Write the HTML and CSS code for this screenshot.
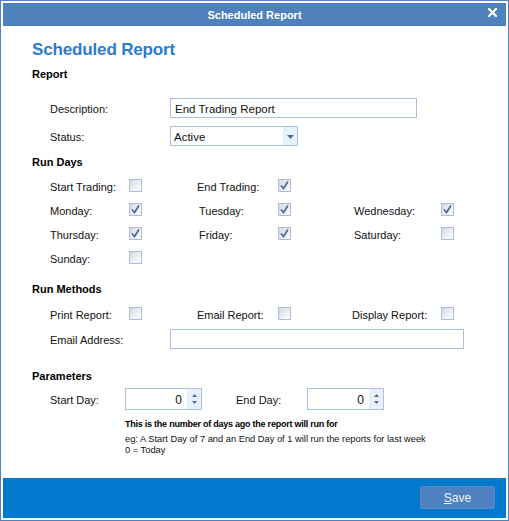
FILE: index.html
```html
<!DOCTYPE html>
<html>
<head>
<meta charset="utf-8">
<link rel="stylesheet" href="styles.css">
</head>
<body>
<div class="window">
  <div class="titlebar">
    <span class="title">Scheduled Report</span>
    <svg class="close" width="9" height="9" viewBox="0 0 9 9"><path d="M1 1 L8 8 M8 1 L1 8" stroke="#fff" stroke-width="2.2" stroke-linecap="square"/></svg>
  </div>
  <div class="content">
    <h1 class="heading">Scheduled Report</h1>
    <div class="sec sec-report">Report</div>
    <div class="field field-desc">
      <label class="flabel">Description:</label>
      <div class="textbox desc">End Trading Report</div>
    </div>
    <div class="field field-status">
      <label class="flabel">Status:</label>
      <div class="select">
        <span class="select-text">Active</span>
        <span class="select-btn"><svg width="7" height="4" viewBox="0 0 7 4"><path d="M0 0 H7 L3.5 4 Z" fill="#4e6d9f"/></svg></span>
      </div>
    </div>

    <div class="sec sec-days">Run Days</div>
    <div class="cbgrid">
      <span class="clabel">Start Trading:</span><span class="cb"></span>
      <span class="clabel">End Trading:</span><span class="cb on"><svg width="11" height="11" viewBox="0 0 11 11"><path d="M2 5.5 L4.5 8.5 L9 1.5" fill="none" stroke="#4b6ea8" stroke-width="1.8"/></svg></span>
      <span></span><span></span>

      <span class="clabel">Monday:</span><span class="cb on"><svg width="11" height="11" viewBox="0 0 11 11"><path d="M2 5.5 L4.5 8.5 L9 1.5" fill="none" stroke="#4b6ea8" stroke-width="1.8"/></svg></span>
      <span class="clabel shift">Tuesday:</span><span class="cb on"><svg width="11" height="11" viewBox="0 0 11 11"><path d="M2 5.5 L4.5 8.5 L9 1.5" fill="none" stroke="#4b6ea8" stroke-width="1.8"/></svg></span>
      <span class="clabel">Wednesday:</span><span class="cb on"><svg width="11" height="11" viewBox="0 0 11 11"><path d="M2 5.5 L4.5 8.5 L9 1.5" fill="none" stroke="#4b6ea8" stroke-width="1.8"/></svg></span>

      <span class="clabel">Thursday:</span><span class="cb on"><svg width="11" height="11" viewBox="0 0 11 11"><path d="M2 5.5 L4.5 8.5 L9 1.5" fill="none" stroke="#4b6ea8" stroke-width="1.8"/></svg></span>
      <span class="clabel shift">Friday:</span><span class="cb on"><svg width="11" height="11" viewBox="0 0 11 11"><path d="M2 5.5 L4.5 8.5 L9 1.5" fill="none" stroke="#4b6ea8" stroke-width="1.8"/></svg></span>
      <span class="clabel">Saturday:</span><span class="cb"></span>

      <span class="clabel">Sunday:</span><span class="cb"></span>
      <span></span><span></span><span></span><span></span>
    </div>

    <div class="sec sec-methods">Run Methods</div>
    <div class="cbgrid methods">
      <span class="clabel">Print Report:</span><span class="cb"></span>
      <span class="clabel">Email Report:</span><span class="cb"></span>
      <span class="clabel back">Display Report:</span><span class="cb"></span>
    </div>
    <div class="field field-email">
      <label class="flabel">Email Address:</label>
      <div class="textbox email"></div>
    </div>

    <div class="sec sec-params">Parameters</div>
    <div class="params">
      <label class="plabel start">Start Day:</label>
      <div class="spinner">
        <span class="spin-val">0</span>
        <span class="spin-btns">
          <svg width="5" height="3" viewBox="0 0 5 3"><path d="M0 3 H5 L2.5 0 Z" fill="#4e6d9f"/></svg>
          <svg width="5" height="3" viewBox="0 0 5 3"><path d="M0 0 H5 L2.5 3 Z" fill="#4e6d9f"/></svg>
        </span>
      </div>
      <label class="plabel end">End Day:</label>
      <div class="spinner">
        <span class="spin-val">0</span>
        <span class="spin-btns">
          <svg width="5" height="3" viewBox="0 0 5 3"><path d="M0 3 H5 L2.5 0 Z" fill="#4e6d9f"/></svg>
          <svg width="5" height="3" viewBox="0 0 5 3"><path d="M0 0 H5 L2.5 3 Z" fill="#4e6d9f"/></svg>
        </span>
      </div>
    </div>
    <div class="note">
      <div class="note-bold">This is the number of days ago the report will run for</div>
      <div class="note-line first">eg: A Start Day of 7 and an End Day of 1 will run the reports for last week</div>
      <div class="note-line">0 = Today</div>
    </div>
  </div>
  <div class="footer">
    <button class="save"><u>S</u>ave</button>
  </div>
</div>
</body>
</html>
```

FILE: styles.css
```css
* { box-sizing: border-box; }
html, body { margin: 0; padding: 0; background: #fff; }
body { font-family: "Liberation Sans", Arial, sans-serif; font-size: 11px; color: #111; }

.window {
  width: 509px;
  height: 521px;
  border: 1px solid #4f81bd;
  padding: 2px;
  display: flex;
  flex-direction: column;
  background: #fff;
}

.titlebar {
  height: 23px;
  background: #4f81bd;
  color: #fff;
  position: relative;
  display: flex;
  align-items: center;
  justify-content: center;
  flex: none;
}
.title { font-weight: bold; font-size: 11px; }
.close { position: absolute; left: 485px; top: 5px; }

.content {
  flex: 1;
  padding: 11px 0 0 29px;
}

.heading {
  margin: 0;
  height: 26px;
  line-height: 26px;
  font-size: 17px;
  letter-spacing: -0.15px;
  font-weight: bold;
  color: #2a7bd2;
}

.sec {
  height: 16px;
  line-height: 16px;
  font-weight: bold;
  font-size: 11px;
  color: #000;
}
.sec-report { margin-top: 3px; }
.sec-days { margin-top: 8px; }
.sec-methods { margin-top: 11px; }
.sec-params { margin-top: 19px; }

.field {
  display: flex;
  align-items: center;
  height: 20px;
  padding-left: 18px;
}
.field-desc { margin-top: 16px; }
.field-status { margin-top: 8px; }
.field-email { margin-top: 3px; }
.flabel { width: 120px; flex: none; padding-top: 2px; }

.textbox {
  height: 20px;
  border: 1px solid #abc1df;
  padding: 2px 4px 0;
  line-height: 16px;
  font-size: 11.5px;
  color: #111;
}
.desc { width: 247px; }
.email { width: 294px; }

.select {
  width: 128px;
  height: 20px;
  border: 1px solid #abc1df;
  display: flex;
  font-size: 11.5px;
}
.select-text { flex: 1; line-height: 16px; padding: 2px 0 0 3px; }
.select-btn {
  width: 14px;
  background: #e8f0fb;
  display: flex;
  align-items: center;
  justify-content: center;
  padding-top: 1px;
}

.cbgrid {
  display: grid;
  grid-template-columns: 79px 68px 81px 76px 87px 13px;
  grid-auto-rows: 24px;
  align-items: center;
  padding-left: 18px;
  margin-top: 4px;
}
.cbgrid.methods { margin-top: 5px; }
.clabel { white-space: nowrap; padding-top: 2px; }
.clabel.shift { padding-left: 2px; }
.clabel.back { margin-left: -2px; }

.cb {
  width: 13px;
  height: 13px;
  border: 1px solid #a9bed8;
  background: linear-gradient(135deg, #d5d9df 0%, #eef0f3 60%, #fbfbfc 100%);
  display: block;
  margin-top: -1px;
}
.cb svg { display: block; margin: 0; }

.params {
  display: flex;
  align-items: center;
  margin-top: 4px;
  padding-left: 18px;
  height: 22px;
}
.plabel { flex: none; padding-top: 2px; }
.plabel.start { width: 75px; }
.plabel.end { width: 71px; margin-left: 34px; }

.spinner {
  width: 77px;
  height: 22px;
  border: 1px solid #abc1df;
  display: flex;
  font-size: 12px;
}
.spin-val { flex: 1; text-align: right; line-height: 18px; padding: 2px 5px 0 0; }
.spin-btns {
  width: 14px;
  background: #e8f0fb;
  display: flex;
  flex-direction: column;
  align-items: center;
  justify-content: space-around;
  padding: 3px 0;
}
.spin-btns svg { display: block; }

.note { padding-left: 93px; margin-top: 8px; }
.note-bold {
  font-weight: bold;
  font-size: 9px;
  letter-spacing: -0.24px;
  line-height: 12px;
  color: #000;
}
.note-line {
  font-size: 9.3px;
  line-height: 11px;
  color: #111;
}
.note-line.first { margin-top: 4px; }

.footer {
  height: 40px;
  background: #0379cd;
  flex: none;
  display: flex;
  justify-content: flex-end;
  align-items: flex-start;
  padding: 8px 11px 0 0;
}
.save {
  width: 75px;
  height: 23px;
  background: #4f81c0;
  border: 1px solid #5a8bc8;
  border-radius: 2px;
  color: #eef3fa;
  font-family: "Liberation Sans", Arial, sans-serif;
  font-size: 12px;
  padding: 0;
}
```
